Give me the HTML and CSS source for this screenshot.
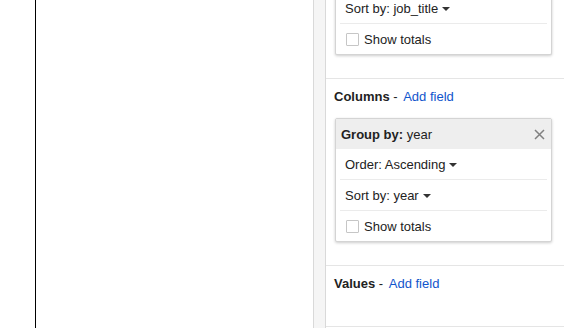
FILE: index.html
```html
<!DOCTYPE html>
<html lang="en">

<head>
    <meta charset="UTF-8">
    <title>Pivot editor</title>
    <link rel="stylesheet" href="styles.css">
</head>

<body>
    <div class="page">
        <div class="canvas">
            <div class="gridline"></div>
        </div>

        <div class="splitter"></div>

        <div class="panel">
            <!-- rows section, scrolled half out of view -->
            <div class="section first">
                <div class="card cut">
                    <div class="row">Sort by: job_title <span class="caret"></span></div>
                    <div class="row"><span class="check"></span>Show totals</div>
                </div>
            </div>

            <div class="section">
                <h3 class="head"><b>Columns</b> - <a href="">Add field</a></h3>
                <div class="card">
                    <div class="card-top">
                        <span><b>Group by:</b> year</span>
                        <svg class="close" width="11" height="11" viewBox="0 0 11 11">
                            <path d="M1 1 L10 10 M10 1 L1 10" stroke="#808080" stroke-width="1.5" fill="none" />
                        </svg>
                    </div>
                    <div class="row">Order: Ascending <span class="caret"></span></div>
                    <div class="row">Sort by: year <span class="caret"></span></div>
                    <div class="row"><span class="check"></span>Show totals</div>
                </div>
            </div>

            <div class="section values">
                <h3 class="head"><b>Values</b> - <a href="">Add field</a></h3>
            </div>
        </div>
    </div>
</body>

</html>
```

FILE: styles.css
```css
* {
    margin: 0;
    padding: 0;
    box-sizing: border-box;
}

body {
    background: #fff;
    font-family: "Liberation Sans", Arial, sans-serif;
    font-size: 13px;
    color: #222;
}

.page {
    display: flex;
    height: 328px;
    overflow: hidden;
}

.canvas {
    width: 313px;
    padding-left: 35px;
}

.gridline {
    width: 1px;
    height: 100%;
    background: #000;
}

.splitter {
    width: 13px;
    background: #f5f5f5;
    border-left: 1px solid #d9d9d9;
    border-right: 1px solid #d9d9d9;
}

.panel {
    flex: 1;
}

.section {
    padding: 10px 12px 23px 8px;
    border-bottom: 1px solid #e5e5e5;
}

.section.first {
    padding-top: 0;
}

.values {
    padding-bottom: 34px;
}

.head {
    font-size: 13px;
    font-weight: normal;
    line-height: 16px;
    margin-bottom: 13px;
}

.values .head {
    margin-bottom: 0;
}

.head a {
    margin-left: 2px;
    color: #15c;
    text-decoration: none;
}

.card {
    margin-left: 1px;
    background: #fff;
    border: 1px solid #d4d4d4;
    border-radius: 2px;
    box-shadow: 0 1px 3px rgba(0, 0, 0, .2);
}

/* 위쪽이 스크롤로 잘려있음 */
.card.cut {
    margin-top: -7px;
    border-top: 0;
}

.card-top {
    display: flex;
    justify-content: space-between;
    align-items: center;
    height: 30px;
    padding: 0 6px 0 5px;
    background: #eee;
}

.row {
    display: flex;
    align-items: center;
    height: 31px;
    margin: 0 4px;
    padding: 0 5px;
    border-top: 1px solid #ebebeb;
}

.card-top + .row,
.cut .row:first-child {
    border-top: 0;
    height: 30px;
}

.caret {
    margin-left: 4px;
    margin-top: 1px;
    border-left: 4px solid transparent;
    border-right: 4px solid transparent;
    border-top: 4px solid #333;
}

.check {
    width: 13px;
    height: 13px;
    margin: 0 5px 0 1px;
    border: 1px solid #c6c6c6;
    border-radius: 1px;
}
```
